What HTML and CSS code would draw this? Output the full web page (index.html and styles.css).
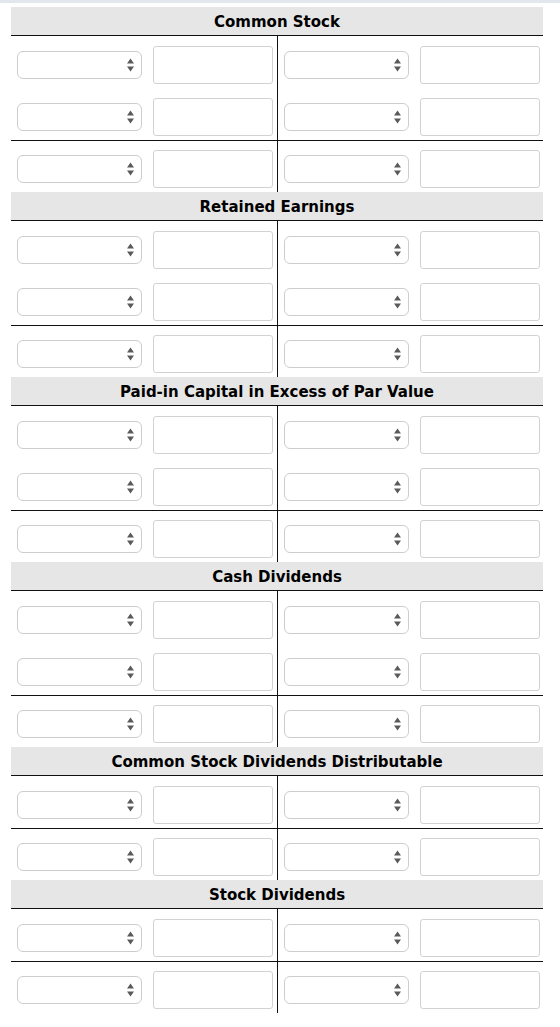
FILE: index.html
```html
<!DOCTYPE html>
<html lang="en">
<head>
<meta charset="utf-8">
<title>T-Accounts</title>
<link rel="stylesheet" href="styles.css">
</head>
<body>
<div class="topbar"></div>
<main class="ledger">

  <section class="acct">
    <h2 class="acct-title">Common Stock</h2>
    <div class="acct-row">
      <div class="side dr"><span class="pick"><select></select><svg class="spin" viewBox="0 0 7 14"><path d="M3.5 0.5 L7 5.5 L0 5.5 Z M0 8.5 L7 8.5 L3.5 13.5 Z"/></svg></span><input type="text"></div>
      <div class="side cr"><span class="pick"><select></select><svg class="spin" viewBox="0 0 7 14"><path d="M3.5 0.5 L7 5.5 L0 5.5 Z M0 8.5 L7 8.5 L3.5 13.5 Z"/></svg></span><input type="text"></div>
    </div>
    <div class="acct-row">
      <div class="side dr"><span class="pick"><select></select><svg class="spin" viewBox="0 0 7 14"><path d="M3.5 0.5 L7 5.5 L0 5.5 Z M0 8.5 L7 8.5 L3.5 13.5 Z"/></svg></span><input type="text"></div>
      <div class="side cr"><span class="pick"><select></select><svg class="spin" viewBox="0 0 7 14"><path d="M3.5 0.5 L7 5.5 L0 5.5 Z M0 8.5 L7 8.5 L3.5 13.5 Z"/></svg></span><input type="text"></div>
    </div>
    <div class="acct-row total">
      <div class="side dr"><span class="pick"><select></select><svg class="spin" viewBox="0 0 7 14"><path d="M3.5 0.5 L7 5.5 L0 5.5 Z M0 8.5 L7 8.5 L3.5 13.5 Z"/></svg></span><input type="text"></div>
      <div class="side cr"><span class="pick"><select></select><svg class="spin" viewBox="0 0 7 14"><path d="M3.5 0.5 L7 5.5 L0 5.5 Z M0 8.5 L7 8.5 L3.5 13.5 Z"/></svg></span><input type="text"></div>
    </div>
  </section>

  <section class="acct">
    <h2 class="acct-title">Retained Earnings</h2>
    <div class="acct-row">
      <div class="side dr"><span class="pick"><select></select><svg class="spin" viewBox="0 0 7 14"><path d="M3.5 0.5 L7 5.5 L0 5.5 Z M0 8.5 L7 8.5 L3.5 13.5 Z"/></svg></span><input type="text"></div>
      <div class="side cr"><span class="pick"><select></select><svg class="spin" viewBox="0 0 7 14"><path d="M3.5 0.5 L7 5.5 L0 5.5 Z M0 8.5 L7 8.5 L3.5 13.5 Z"/></svg></span><input type="text"></div>
    </div>
    <div class="acct-row">
      <div class="side dr"><span class="pick"><select></select><svg class="spin" viewBox="0 0 7 14"><path d="M3.5 0.5 L7 5.5 L0 5.5 Z M0 8.5 L7 8.5 L3.5 13.5 Z"/></svg></span><input type="text"></div>
      <div class="side cr"><span class="pick"><select></select><svg class="spin" viewBox="0 0 7 14"><path d="M3.5 0.5 L7 5.5 L0 5.5 Z M0 8.5 L7 8.5 L3.5 13.5 Z"/></svg></span><input type="text"></div>
    </div>
    <div class="acct-row total">
      <div class="side dr"><span class="pick"><select></select><svg class="spin" viewBox="0 0 7 14"><path d="M3.5 0.5 L7 5.5 L0 5.5 Z M0 8.5 L7 8.5 L3.5 13.5 Z"/></svg></span><input type="text"></div>
      <div class="side cr"><span class="pick"><select></select><svg class="spin" viewBox="0 0 7 14"><path d="M3.5 0.5 L7 5.5 L0 5.5 Z M0 8.5 L7 8.5 L3.5 13.5 Z"/></svg></span><input type="text"></div>
    </div>
  </section>

  <section class="acct">
    <h2 class="acct-title">Paid-in Capital in Excess of Par Value</h2>
    <div class="acct-row">
      <div class="side dr"><span class="pick"><select></select><svg class="spin" viewBox="0 0 7 14"><path d="M3.5 0.5 L7 5.5 L0 5.5 Z M0 8.5 L7 8.5 L3.5 13.5 Z"/></svg></span><input type="text"></div>
      <div class="side cr"><span class="pick"><select></select><svg class="spin" viewBox="0 0 7 14"><path d="M3.5 0.5 L7 5.5 L0 5.5 Z M0 8.5 L7 8.5 L3.5 13.5 Z"/></svg></span><input type="text"></div>
    </div>
    <div class="acct-row">
      <div class="side dr"><span class="pick"><select></select><svg class="spin" viewBox="0 0 7 14"><path d="M3.5 0.5 L7 5.5 L0 5.5 Z M0 8.5 L7 8.5 L3.5 13.5 Z"/></svg></span><input type="text"></div>
      <div class="side cr"><span class="pick"><select></select><svg class="spin" viewBox="0 0 7 14"><path d="M3.5 0.5 L7 5.5 L0 5.5 Z M0 8.5 L7 8.5 L3.5 13.5 Z"/></svg></span><input type="text"></div>
    </div>
    <div class="acct-row total">
      <div class="side dr"><span class="pick"><select></select><svg class="spin" viewBox="0 0 7 14"><path d="M3.5 0.5 L7 5.5 L0 5.5 Z M0 8.5 L7 8.5 L3.5 13.5 Z"/></svg></span><input type="text"></div>
      <div class="side cr"><span class="pick"><select></select><svg class="spin" viewBox="0 0 7 14"><path d="M3.5 0.5 L7 5.5 L0 5.5 Z M0 8.5 L7 8.5 L3.5 13.5 Z"/></svg></span><input type="text"></div>
    </div>
  </section>

  <section class="acct">
    <h2 class="acct-title">Cash Dividends</h2>
    <div class="acct-row">
      <div class="side dr"><span class="pick"><select></select><svg class="spin" viewBox="0 0 7 14"><path d="M3.5 0.5 L7 5.5 L0 5.5 Z M0 8.5 L7 8.5 L3.5 13.5 Z"/></svg></span><input type="text"></div>
      <div class="side cr"><span class="pick"><select></select><svg class="spin" viewBox="0 0 7 14"><path d="M3.5 0.5 L7 5.5 L0 5.5 Z M0 8.5 L7 8.5 L3.5 13.5 Z"/></svg></span><input type="text"></div>
    </div>
    <div class="acct-row">
      <div class="side dr"><span class="pick"><select></select><svg class="spin" viewBox="0 0 7 14"><path d="M3.5 0.5 L7 5.5 L0 5.5 Z M0 8.5 L7 8.5 L3.5 13.5 Z"/></svg></span><input type="text"></div>
      <div class="side cr"><span class="pick"><select></select><svg class="spin" viewBox="0 0 7 14"><path d="M3.5 0.5 L7 5.5 L0 5.5 Z M0 8.5 L7 8.5 L3.5 13.5 Z"/></svg></span><input type="text"></div>
    </div>
    <div class="acct-row total">
      <div class="side dr"><span class="pick"><select></select><svg class="spin" viewBox="0 0 7 14"><path d="M3.5 0.5 L7 5.5 L0 5.5 Z M0 8.5 L7 8.5 L3.5 13.5 Z"/></svg></span><input type="text"></div>
      <div class="side cr"><span class="pick"><select></select><svg class="spin" viewBox="0 0 7 14"><path d="M3.5 0.5 L7 5.5 L0 5.5 Z M0 8.5 L7 8.5 L3.5 13.5 Z"/></svg></span><input type="text"></div>
    </div>
  </section>

  <section class="acct">
    <h2 class="acct-title">Common Stock Dividends Distributable</h2>
    <div class="acct-row">
      <div class="side dr"><span class="pick"><select></select><svg class="spin" viewBox="0 0 7 14"><path d="M3.5 0.5 L7 5.5 L0 5.5 Z M0 8.5 L7 8.5 L3.5 13.5 Z"/></svg></span><input type="text"></div>
      <div class="side cr"><span class="pick"><select></select><svg class="spin" viewBox="0 0 7 14"><path d="M3.5 0.5 L7 5.5 L0 5.5 Z M0 8.5 L7 8.5 L3.5 13.5 Z"/></svg></span><input type="text"></div>
    </div>
    <div class="acct-row total">
      <div class="side dr"><span class="pick"><select></select><svg class="spin" viewBox="0 0 7 14"><path d="M3.5 0.5 L7 5.5 L0 5.5 Z M0 8.5 L7 8.5 L3.5 13.5 Z"/></svg></span><input type="text"></div>
      <div class="side cr"><span class="pick"><select></select><svg class="spin" viewBox="0 0 7 14"><path d="M3.5 0.5 L7 5.5 L0 5.5 Z M0 8.5 L7 8.5 L3.5 13.5 Z"/></svg></span><input type="text"></div>
    </div>
  </section>

  <section class="acct">
    <h2 class="acct-title">Stock Dividends</h2>
    <div class="acct-row">
      <div class="side dr"><span class="pick"><select></select><svg class="spin" viewBox="0 0 7 14"><path d="M3.5 0.5 L7 5.5 L0 5.5 Z M0 8.5 L7 8.5 L3.5 13.5 Z"/></svg></span><input type="text"></div>
      <div class="side cr"><span class="pick"><select></select><svg class="spin" viewBox="0 0 7 14"><path d="M3.5 0.5 L7 5.5 L0 5.5 Z M0 8.5 L7 8.5 L3.5 13.5 Z"/></svg></span><input type="text"></div>
    </div>
    <div class="acct-row total">
      <div class="side dr"><span class="pick"><select></select><svg class="spin" viewBox="0 0 7 14"><path d="M3.5 0.5 L7 5.5 L0 5.5 Z M0 8.5 L7 8.5 L3.5 13.5 Z"/></svg></span><input type="text"></div>
      <div class="side cr"><span class="pick"><select></select><svg class="spin" viewBox="0 0 7 14"><path d="M3.5 0.5 L7 5.5 L0 5.5 Z M0 8.5 L7 8.5 L3.5 13.5 Z"/></svg></span><input type="text"></div>
    </div>
  </section>

</main>
</body>
</html>
```

FILE: styles.css
```css
* {
  box-sizing: border-box;
}

html,
body {
  margin: 0;
  padding: 0;
  background: #ffffff;
  font-family: "DejaVu Sans", Verdana, sans-serif;
}

/* thin band along the top of the frame */
.topbar {
  height: 3px;
  background: #e2e7ee;
}

.ledger {
  width: 532px;
  margin: 4px 0 0 11px;
}

/* account title bar */
.acct-title {
  margin: 0;
  height: 29px;
  padding-top: 1px;
  line-height: 29px;
  background: #e6e6e6;
  border-bottom: 1px solid #111;
  text-align: center;
  font-size: 15px;
  font-weight: bold;
  color: #000;
  overflow: hidden;
}

/* one debit / credit line of the T-account */
.acct-row {
  display: grid;
  grid-template-columns: 267px 265px;
  height: 52px;
}

.acct-row.total {
  border-top: 1px solid #111;
}

.side {
  display: flex;
  align-items: flex-start;
  gap: 11px;
  padding: 10px 0 0 6px;
}

.acct-row.total .side {
  padding-top: 9px;
}

.side.dr {
  border-right: 1px solid #111;
}

.pick {
  position: relative;
  display: block;
  width: 125px;
  height: 28px;
  margin-top: 5px;
}

.pick select {
  appearance: none;
  -webkit-appearance: none;
  display: block;
  width: 125px;
  height: 28px;
  margin: 0;
  padding: 0 20px 0 8px;
  border: 1px solid #cdcdcd;
  border-radius: 6px;
  background: #ffffff;
  font: 13px "DejaVu Sans", sans-serif;
}

/* up/down marker drawn over the select's right edge */
.spin {
  position: absolute;
  top: 7px;
  right: 8px;
  width: 7px;
  height: 14px;
  fill: #5a5a5a;
  pointer-events: none;
}

.side input {
  display: block;
  width: 120px;
  height: 38px;
  margin: 0;
  padding: 0 6px;
  border: 1px solid #d2d2d2;
  border-radius: 3px;
  background: #ffffff;
  font: 13px "DejaVu Sans", sans-serif;
}
```
